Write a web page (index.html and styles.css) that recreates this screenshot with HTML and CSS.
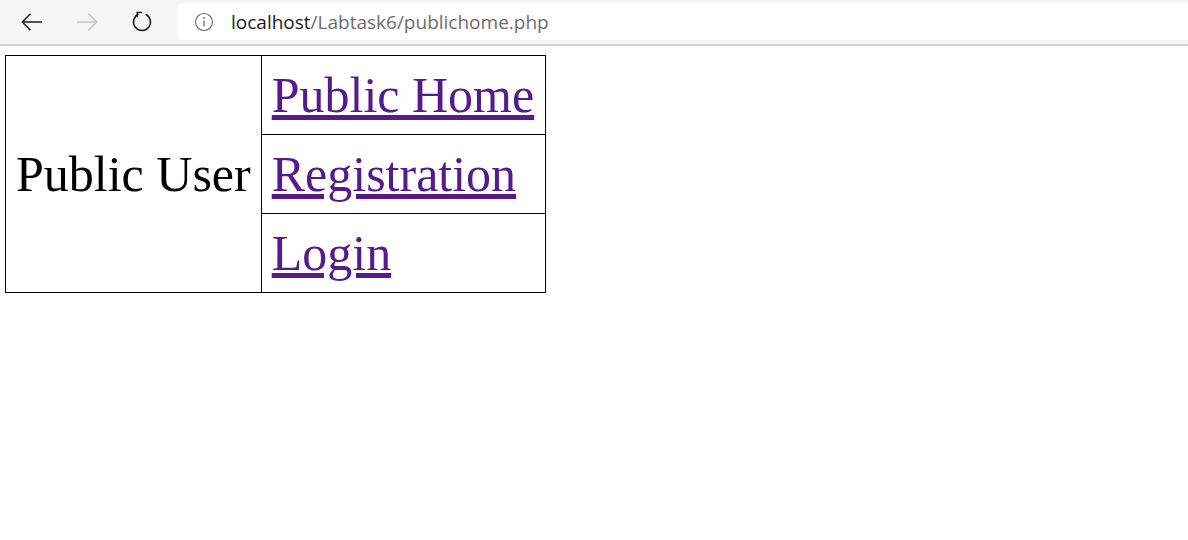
FILE: index.html
```html
<!DOCTYPE html>
<html lang="en">
<head>
<meta charset="utf-8">
<title>Public Home</title>
<link rel="stylesheet" href="styles.css">
</head>
<body>
<header class="chrome">
  <nav class="nav-buttons">
    <span class="nav-btn">
      <svg class="icon" viewBox="0 0 24 24" width="24" height="24"><path d="M22 12H2.5M10.5 3.8L2.3 12l8.2 8.2" fill="none" stroke="#1b1b1b" stroke-width="1.5"/></svg>
    </span>
    <span class="nav-btn">
      <svg class="icon" viewBox="0 0 24 24" width="24" height="24"><path d="M2 12h19.5M13.5 3.8L21.7 12l-8.2 8.2" fill="none" stroke="#c4c4c4" stroke-width="1.5"/></svg>
    </span>
    <span class="nav-btn">
      <svg class="icon" viewBox="0 0 24 24" width="24" height="24"><path d="M8.4 4.3A8.5 8.5 0 1 0 15.6 4.3" fill="none" stroke="#1b1b1b" stroke-width="1.5"/><path d="M11.8 2.6H7.2V7.2" fill="none" stroke="#1b1b1b" stroke-width="1.5"/></svg>
    </span>
  </nav>
  <div class="address">
    <svg class="info" viewBox="0 0 20 20" width="20" height="20"><circle cx="10" cy="10" r="8.5" fill="none" stroke="#707070" stroke-width="1.2"/><circle cx="10" cy="6" r="1" fill="#707070"/><path d="M10 8.6v6" stroke="#707070" stroke-width="1.3"/></svg>
    <span class="url"><span class="host">localhost</span>/Labtask6/publichome.php</span>
  </div>
</header>
<main class="page">
  <table class="menu">
    <tr>
      <td rowspan="3" class="label">Public User</td>
      <td class="link"><a href="#">Public Home</a></td>
    </tr>
    <tr>
      <td class="link"><a href="#">Registration</a></td>
    </tr>
    <tr>
      <td class="link"><a href="#">Login</a></td>
    </tr>
  </table>
</main>
</body>
</html>
```
FILE: styles.css
```css
html, body {
  margin: 0;
  padding: 0;
  background: #ffffff;
}

.chrome {
  display: flex;
  align-items: stretch;
  background: #f5f5f5;
  padding: 3px 0 4px;
  border-bottom: 2px solid #d0d0d0;
  height: 37px;
}

.nav-buttons {
  display: flex;
  padding-left: 4px;
  width: 173px;
}

.nav-btn {
  width: 55px;
  display: flex;
  align-items: center;
  justify-content: center;
}

.icon {
  display: block;
}

.address {
  flex: 1;
  background: #ffffff;
  border-radius: 6px 0 0 6px;
  display: flex;
  align-items: center;
  padding-left: 17px;
  gap: 17px;
  font-family: "Open Sans", "Noto Sans", sans-serif;
  font-size: 19px;
  color: #6d6d6d;
}

.info {
  display: block;
}

.host {
  color: #1b1b1b;
}

.page {
  padding: 9px 0 0 5px;
}

.menu {
  border-collapse: collapse;
  font-family: "Liberation Serif", "Times New Roman", serif;
  font-size: 50px;
  line-height: 58px;
}

.menu td {
  border: 1px solid #000000;
  padding: 10px;
}

.menu .link {
  padding-right: 11px;
}

.menu .label {
  color: #000000;
}

.menu a {
  color: #551a8b;
}
```
